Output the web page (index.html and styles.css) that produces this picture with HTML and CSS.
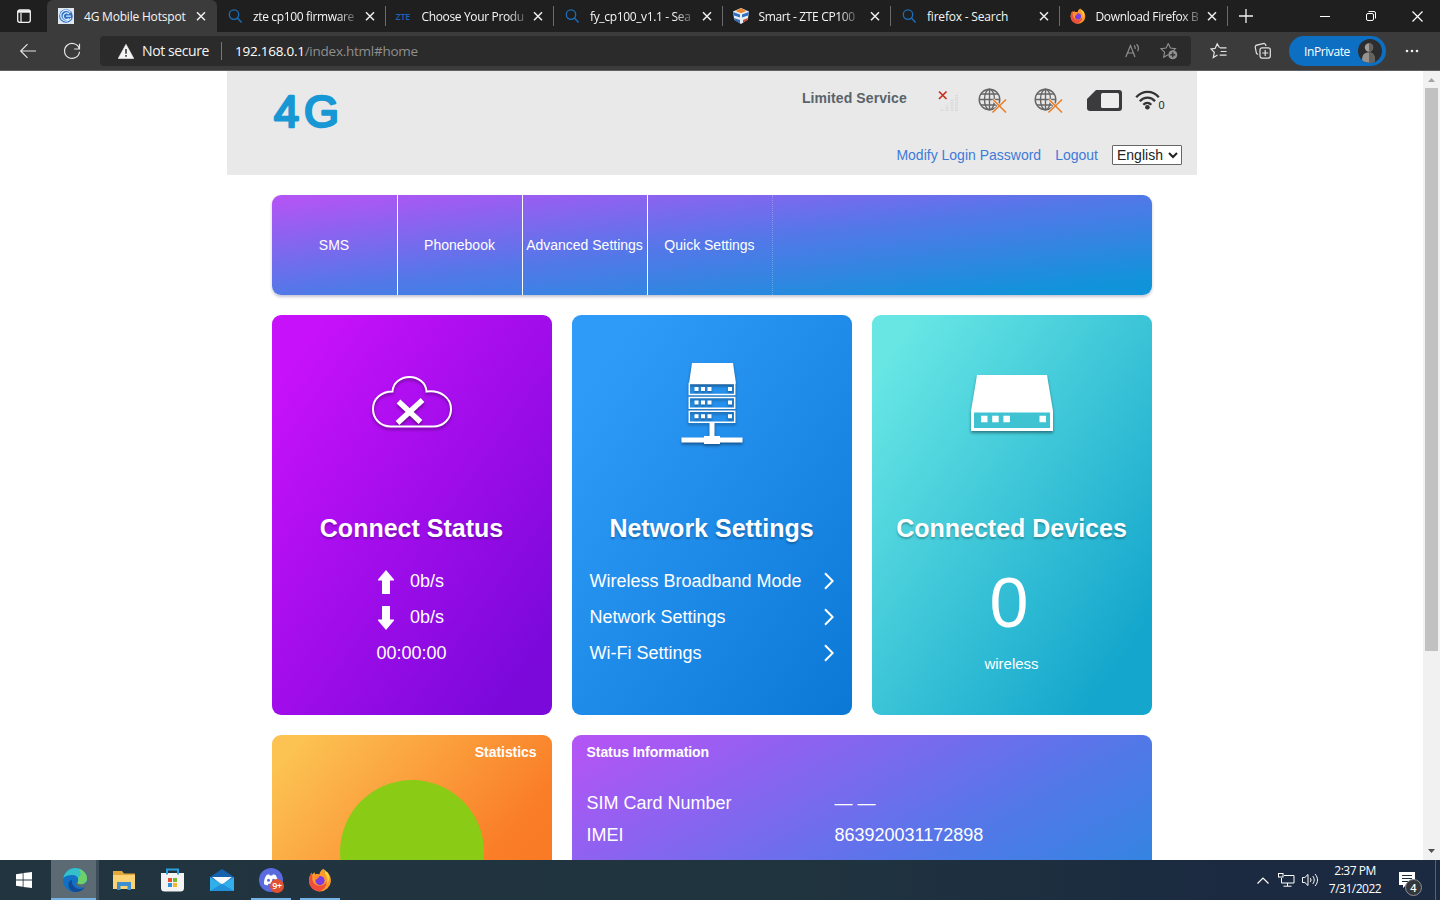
FILE: index.html
```html
<!DOCTYPE html>
<html lang="en">
  <head>
    <meta charset="UTF-8" />
    <meta name="viewport" content="width=device-width, initial-scale=1.0" />
    <title>4G Mobile Hotspot</title>
    <link rel="stylesheet" href="styles.css">
  </head>
  <body>
    <!-- shared icons -->
    <svg class="defs" width="0" height="0">
      <symbol id="close" viewBox="0 0 16 16">
        <path d="M4 4.200l8 8M12 4.200l-8 8" stroke="#f0f0f0" stroke-width="1.500" fill="none" />
      </symbol>
      <symbol id="search" viewBox="0 0 16 16">
        <circle cx="7" cy="6.600" r="4.700" stroke="#1b6fb8" stroke-width="1.300" fill="none" />
        <path d="M10.400 10l4.200 4.400" stroke="#1b6fb8" stroke-width="1.500" />
      </symbol>
      <symbol id="firefox" viewBox="0 0 24 24">
        <path d="M15.500.800c1 2 1 3 1.200 4.200 1.400.400 2-.400 2.300-1.200 3 3.200 4.200 6.200 3.900 9.700A11 11 0 0 1 1 13.500C.800 10 2 7 3.800 4.600l.400 2.200c.800-1.200 1.400-1.900 2.300-2.600l.600 2.300c1.600-.600 3-.500 4.300 0 .400-2.400 1.700-4.500 4.100-5.700z" fill="#ff9a2b" />
        <path d="M1 13.500C.900 10.500 2 7.400 3.800 5l.600 3.400c-.600 3 .600 8.600 6.600 9.300 3.600.400 6.500-1.500 7.500-4.500.600 5-3.500 9.600-8 10C5.500 23 1.400 18.600 1 13.500z" fill="#f04e3c" />
        <path d="M15.500.800c1 2 1 3 1.200 4.200 3.300 4 3.300 7.600 1.800 11 2.600-2.600 4.300-7.300 1-11.500C18 3 16.600 2.300 15.500.800z" fill="#ffd23e" />
        <circle cx="12" cy="12.600" r="4.600" fill="#7a3ee0" />
        <path d="M6 8.500c2-1.600 4.500-1.200 6 .6-2 .3-2 1.400-3.200 2.200-1.600.8-2.800-1-2.800-2.800z" fill="#ff8a26" />
      </symbol>
      <symbol id="globe" viewBox="0 0 30 26">
        <g fill="none" stroke="#666" stroke-width="1.400">
          <circle cx="11.500" cy="11.500" r="10.300" />
          <ellipse cx="11.500" cy="11.500" rx="5" ry="10.300" />
          <path d="M11.500 1v21M1 11.500h21M3 6h17M3 17h17" />
        </g>
        <path d="M15 11.500l13 13M28 11.500l-13.500 13" stroke="#e9e9e9" stroke-width="3" />
        <path d="M15 11.500l13 13M28 11.500l-13.500 13" stroke="#e9812f" stroke-width="1.700" />
      </symbol>
      <symbol id="chevron" viewBox="0 0 10 18">
        <path d="M1 1.200l7.700 7.800L1 16.800" stroke="#fff" stroke-width="2" fill="none" />
      </symbol>
      <symbol id="arrow" viewBox="0 0 16 24">
        <path d="M8 0l8 9.500v1h-4V24H4V10.500H0v-1z" fill="#fff" />
      </symbol>
    </svg>

    <div class="tabs">
      <div class="tab-actions">
        <svg width="16" height="16" viewBox="0 0 16 16">
          <rect x="1.700" y="2" width="12.600" height="12.300" rx="2" fill="none" stroke="#f2f2f2" stroke-width="1.300" />
          <path d="M1.700 3.500h12.600" stroke="#f2f2f2" stroke-width="2.400" />
          <path d="M5 5v9" stroke="#f2f2f2" stroke-width="1.200" />
        </svg>
      </div>
      <div class="tab active">
        <svg width="16" height="16" viewBox="0 0 16 16">
          <rect width="16" height="16" fill="#dfe7f0" />
          <circle cx="8" cy="8" r="6.800" fill="#2d6fc0" />
          <path d="M12.500 4.500A5.400 5.400 0 1 0 13 10M8 8.200h5M11 6A3.300 3.300 0 1 0 11 10.500" stroke="#d7eaff" stroke-width="1.300" fill="none" />
        </svg>
        <span class="tab-title">4G Mobile Hotspot</span>
        <svg class="close" width="16" height="16"><use href="#close" /></svg>
      </div>
      <div class="tab">
        <svg width="16" height="16"><use href="#search" /></svg>
        <span class="tab-title fade">zte cp100 firmware</span>
        <svg class="close" width="16" height="16"><use href="#close" /></svg>
      </div>
      <div class="tab">
        <span class="zte">ZTE</span>
        <span class="tab-title fade">Choose Your Produ</span>
        <svg class="close" width="16" height="16"><use href="#close" /></svg>
      </div>
      <div class="tab">
        <svg width="16" height="16"><use href="#search" /></svg>
        <span class="tab-title fade">fy_cp100_v1.1 - Sea</span>
        <svg class="close" width="16" height="16"><use href="#close" /></svg>
      </div>
      <div class="tab">
        <svg width="16" height="16" viewBox="0 0 16 16">
          <path d="M0 3.500L8 0l8 3.500-1.200 8L8 16l-6.800-4.500z" fill="#e8eef6" />
          <path d="M2.500 3L8 .3 13.500 3 8 5.200z" fill="#e8842c" />
          <path d="M0 4l7 2.500v3L1 7.500zM16 4L9 6.500v3l6-2z" fill="#2f6fbf" />
          <path d="M1 10l6 2v3.500l-5.500-3.300z" fill="#3a6fae" />
          <path d="M15 10l-5 2v2.800l4.300-3z" fill="#c9402c" />
        </svg>
        <span class="tab-title fade">Smart - ZTE CP100</span>
        <svg class="close" width="16" height="16"><use href="#close" /></svg>
      </div>
      <div class="tab">
        <svg width="16" height="16"><use href="#search" /></svg>
        <span class="tab-title">firefox - Search</span>
        <svg class="close" width="16" height="16"><use href="#close" /></svg>
      </div>
      <div class="tab">
        <svg width="16" height="16"><use href="#firefox" /></svg>
        <span class="tab-title fade">Download Firefox B</span>
        <svg class="close" width="16" height="16"><use href="#close" /></svg>
      </div>
      <div class="new-tab">
        <svg width="14" height="14" viewBox="0 0 14 14"><path d="M7 0v14M0 7h14" stroke="#f2f2f2" stroke-width="1.300" /></svg>
      </div>
      <div class="window-buttons">
        <div><svg width="10" height="10" viewBox="0 0 10 10"><path d="M0 5.500h10" stroke="#fff" /></svg></div>
        <div><svg width="10" height="10" viewBox="0 0 10 10"><g fill="none" stroke="#fff"><rect x=".5" y="2.500" width="7" height="7" rx="1.500" /><path d="M2.500.5H8A1.500 1.500 0 0 1 9.500 2v5.500" /></g></svg></div>
        <div><svg width="11" height="11" viewBox="0 0 11 11"><path d="M.5.500l10 10M10.500.5l-10 10" stroke="#fff" stroke-width="1.200" /></svg></div>
      </div>
    </div>

    <div class="toolbar">
      <div class="nav-buttons">
        <svg width="18" height="16" viewBox="0 0 18 16"><path d="M17 8H1.800M8.500 1.200L1.700 8l6.800 6.800" stroke="#e4e4e4" stroke-width="1.200" fill="none" /></svg>
        <svg width="18" height="18" viewBox="0 0 18 18"><path d="M16.300 7A7.500 7.500 0 1 0 16.500 9.700M16.500 1.800V7h-5.300" stroke="#e4e4e4" stroke-width="1.200" fill="none" /></svg>
      </div>
      <div class="address">
        <svg width="16" height="15" viewBox="0 0 16 15">
          <path d="M8 .3L15.800 14.500H.2z" fill="#f4f4f4" stroke="#f4f4f4" stroke-width=".6" stroke-linejoin="round" />
          <path d="M8 5v4.700M8 11v1.700" stroke="#2b2b2b" stroke-width="1.500" />
        </svg>
        <span class="not-secure">Not secure</span>
        <span class="url"><b>192.168.0.1</b>/index.html#home</span>
        <svg class="read" width="16" height="16" viewBox="0 0 16 16">
          <path d="M.8 14L5.500 2.500 10 14M2.400 10h6.200" stroke="#909090" stroke-width="1.200" fill="none" />
          <path d="M9 2.500c1 .8 1.400 2 1.200 3.500M11.500 1.200c1.800 1.600 2.300 4.500 1.200 7" stroke="#909090" stroke-width="1.200" fill="none" />
        </svg>
        <svg class="add-fav" width="18" height="18" viewBox="0 0 18 18">
          <path d="M8.300 1.500l2.100 4.600 5 .6-2.300 2.100M8 12.700l-4.300 2.500.9-5L1 6.700l5.100-.6 2.200-4.600" stroke="#909090" stroke-width="1.100" fill="none" />
          <circle cx="12.800" cy="12.800" r="4.500" fill="#909090" />
          <path d="M12.800 10.300v5M10.300 12.800h5" stroke="#2b2b2b" stroke-width="1.200" />
        </svg>
      </div>
      <div class="tools">
        <svg width="18" height="18" viewBox="0 0 18 18">
          <path d="M9.500 5.700L7.200 1.800 5.100 6.400 1 7l3.300 3.300-1 5.200 4.200-2.500M10 5.800h6.500M10.700 9.500h5.800M9.700 13.200h6.800" stroke="#e4e4e4" stroke-width="1.200" fill="none" />
        </svg>
        <svg width="18" height="18" viewBox="0 0 18 18">
          <g fill="none" stroke="#e4e4e4" stroke-width="1.200">
            <rect x="6" y="5.800" width="10.300" height="10.300" rx="2" />
            <path d="M11.200 8v6M8.200 11h6M4 12.500l-1.500-1L1.200 5 2 3.300 10 1.300l1.500 1 .5 1.700" />
          </g>
        </svg>
        <div class="inprivate">
          <span>InPrivate</span>
          <svg width="24" height="24" viewBox="0 0 24 24">
            <circle cx="12" cy="12" r="12" fill="#2d2d30" />
            <circle cx="11" cy="8.500" r="4.200" fill="#a09d9a" />
            <path d="M4 21c0-6 3-7.500 7-7.500s6 2 6 9.200C12 24.500 7 24 4 21z" fill="#96938f" />
            <path d="M11 4.300a4.200 4.200 0 0 1 0 8.400zM11 13.500c4 0 6 2 6 9.200-2 .9-4 1.200-6 1z" fill="#64615f" />
          </svg>
        </div>
        <svg class="more" width="14" height="4" viewBox="0 0 14 4"><g fill="#eee"><circle cx="2" cy="2" r="1.300" /><circle cx="7" cy="2" r="1.300" /><circle cx="12" cy="2" r="1.300" /></g></svg>
      </div>
    </div>

    <div class="viewport">
      <div class="page">
        <header class="header">
          <svg class="logo" width="70" height="50" viewBox="0 0 70 50">
            <text x="1 31" y="41">4G</text>
          </svg>
          <div class="header-right">
            <div class="status-bar">
              <span class="service">Limited Service</span>
              <svg class="signal" width="20" height="22" viewBox="0 0 20 22">
                <path d="M4 21v-2.500M9 21v-6M14 21V9.500M18.500 21V5" stroke="#dadada" stroke-width="3" stroke-dasharray="1.500 1" />
                <path d="M1 1.500l7.500 7.500M8.500 1.500L1 9" stroke="#c9301c" stroke-width="1.700" />
              </svg>
              <svg class="globe" width="30" height="26"><use href="#globe" /></svg>
              <svg class="globe" width="30" height="26"><use href="#globe" /></svg>
              <svg class="sim" width="35" height="21" viewBox="0 0 35 21">
                <path d="M9 0h23a3 3 0 0 1 3 3v15a3 3 0 0 1-3 3H3a3 3 0 0 1-3-3V9z" fill="#3b3b3d" />
                <rect x="14" y="3" width="18" height="15" rx="1.500" fill="#ededed" />
              </svg>
              <svg class="wifi" width="26" height="20" viewBox="0 0 26 20">
                <g fill="none" stroke="#333" stroke-width="2.300">
                  <path d="M1.200 7.200c6.500-7 16.500-7 22.600 0" />
                  <path d="M4.800 11.200c4.500-4.700 11-4.700 15.200 0" />
                  <path d="M8.300 14.800c2.500-2.500 5.600-2.500 8 0" />
                </g>
                <circle cx="12.400" cy="17.300" r="2.300" fill="#333" />
              </svg>
              <span class="wifi-count">0</span>
            </div>
            <div class="links">
              <a>Modify Login Password</a>
              <a>Logout</a>
              <select><option>English</option></select>
            </div>
          </div>
        </header>

        <main class="content">
          <nav class="menu">
            <a>SMS</a>
            <a>Phonebook</a>
            <a>Advanced Settings</a>
            <a>Quick Settings</a>
          </nav>

          <div class="cards">
            <section class="card connect">
              <div class="card-icon">
                <svg width="82" height="54" viewBox="0 0 82 54">
                  <path d="M19.500 51.500C9 51.500 2 43.500 2 34c0-10 8-17.500 19.500-17.500C22 8 29.500 2 38.500 2S55 8 55.500 16.500C69 14.500 80 22.500 80 34c0 10-7.500 17.500-18 17.500z" fill="none" stroke="#fff" stroke-width="2" />
                  <path d="M27.500 26.500l22 20.500M51.500 25L26.500 48" stroke="#fff" stroke-width="5.500" />
                </svg>
              </div>
              <h3>Connect Status</h3>
              <ul class="speed">
                <li><svg width="16" height="24"><use href="#arrow" /></svg>0b/s</li>
                <li><svg class="down" width="16" height="24"><use href="#arrow" /></svg>0b/s</li>
                <li>00:00:00</li>
              </ul>
            </section>

            <section class="card network">
              <div class="card-icon">
                <svg width="62" height="82" viewBox="0 0 62 82">
                  <path d="M11 0h41l3 20.500H8z" fill="#fff" />
                  <g fill="none" stroke="#fff" stroke-width="1.500">
                    <path d="M8.300 20.500h45.400v11H8.300zM8.300 34.500h45.400v10.700H8.300zM8.300 48.300h45.400v11H8.300z" />
                  </g>
                  <path d="M13.500 26h17M13.500 39.600h17M13.500 53.300h17" stroke="#fff" stroke-width="4" stroke-dasharray="4 2.500" />
                  <path d="M47 26h4M47 39.600h4M47 53.300h4" stroke="#fff" stroke-width="4" />
                  <path d="M28.500 60h5v13h5.500v1.500h22.500V79.500H39V81H23v-1.500H.5V74.500H23V73h5.500z" fill="#fff" />
                </svg>
              </div>
              <h3>Network Settings</h3>
              <ul class="options">
                <li>Wireless Broadband Mode <svg width="10" height="18"><use href="#chevron" /></svg></li>
                <li>Network Settings <svg width="10" height="18"><use href="#chevron" /></svg></li>
                <li>Wi-Fi Settings <svg width="10" height="18"><use href="#chevron" /></svg></li>
              </ul>
            </section>

            <section class="card devices">
              <div class="card-icon">
                <svg width="82" height="56" viewBox="0 0 82 56">
                  <path d="M6 0h70l6 36v20H0V36z" fill="#fff" />
                  <path class="device-front" d="M3 37.500h76V53H3z" />
                  <path d="M10 44h30" stroke="#fff" stroke-width="6.500" stroke-dasharray="6.500 4.700" />
                  <path d="M68.500 44H75" stroke="#fff" stroke-width="6.500" />
                </svg>
              </div>
              <h3>Connected Devices</h3>
              <div class="count">0</div>
              <div class="count-label">wireless</div>
            </section>

            <section class="card statistics">
              <h4>Statistics</h4>
              <div class="pie"></div>
            </section>

            <section class="card status-info">
              <h4>Status Information</h4>
              <dl>
                <dt>SIM Card Number</dt><dd>— —</dd>
                <dt>IMEI</dt><dd>863920031172898</dd>
              </dl>
            </section>
          </div>
        </main>
      </div>

      <div class="scrollbar">
        <svg width="7" height="4" viewBox="0 0 7 4"><path d="M0 4l3.500-4L7 4z" fill="#a3a3a3" /></svg>
        <div class="track"><div class="thumb"></div></div>
        <svg width="7" height="4" viewBox="0 0 7 4"><path d="M0 0h7L3.500 4z" fill="#505050" /></svg>
      </div>
    </div>

    <div class="taskbar">
      <div class="task start">
        <svg width="16" height="16" viewBox="0 0 16 16"><path d="M0 2.200L6.700 1.200v6.400H0zM7.500 1.100L16 0v7.600H7.500zM0 8.400h6.700v6.400L0 13.800zM7.500 8.400H16V16l-8.500-1.100z" fill="#fff" /></svg>
      </div>
      <div class="task current">
        <svg width="24" height="24" viewBox="0 0 24 24">
          <circle cx="12" cy="12" r="12" fill="#1271c4" />
          <path d="M.3 10C1.500 4 6.500 0 12 0c7 0 12 5 12 10.500 0 4-3 6-6 6-2.500 0-4-.8-3.500-1.800 2-3 .5-7.700-5-7.700-4 0-7.300 1-9.200 3z" fill="#35bfc9" />
          <path d="M16 1C20.500 2.500 24 6 24 10.500c0 4-3 6-6 6-2.500 0-4-.8-3.500-1.800 1-1.500 1.200-3.400.4-5C18 9 18.500 5 16 1z" fill="#6fd068" />
          <path d="M9 12c-1 5 3.500 9.500 8.500 9 2-.2 3.500-1 4.700-2C20 22 16.500 24 12.500 24 7 24 5 19 5.500 15.500 6 13.200 7.500 12 9 12z" fill="#114a96" />
          <path d="M14.500 14.700c-.5 1 1 1.800 3.500 1.800 2.500 0 4.800-1.200 5.600-3.400.6 2-.4 4.500-1.700 5.700-3.400 1.500-8.400.2-9.600-3.800z" fill="#5b6a73" />
        </svg>
      </div>
      <div class="task">
        <svg width="22" height="19" viewBox="0 0 22 19">
          <path d="M0 0h9l2 2.500h11V18H0z" fill="#e2a83c" />
          <path d="M0 4h22v14H0z" fill="#fbd375" />
          <path d="M4 19v-8h14v8h-3.500v-4h-7v4z" fill="#3d8fd0" />
        </svg>
      </div>
      <div class="task">
        <svg width="23" height="24" viewBox="0 0 23 24">
          <path d="M0 5h23v15a3.500 3.500 0 0 1-3.500 3.500h-16A3.500 3.500 0 0 1 0 20z" fill="#f3f3f3" />
          <path d="M6 6.500V1.500h11v5" fill="none" stroke="#2aa0dc" stroke-width="2" />
          <path d="M7 10h4v4H7z" fill="#e8502c" /><path d="M12 10h4v4h-4z" fill="#7db72f" />
          <path d="M7 15h4v4H7z" fill="#2b95d8" /><path d="M12 15h4v4h-4z" fill="#f5b62c" />
        </svg>
      </div>
      <div class="task">
        <svg width="24" height="22" viewBox="0 0 24 22">
          <path d="M0 8L12 0l12 8v14H0z" fill="#1461ad" />
          <path d="M2 8h20l-10 8z" fill="#f5f9fd" />
          <path d="M0 8l12 7.200L24 8v14H0z" fill="#32aeea" />
          <path d="M0 22l12-7.200L24 22z" fill="#2291dc" />
        </svg>
      </div>
      <div class="task running">
        <svg width="24" height="24" viewBox="0 0 24 24">
          <circle cx="12" cy="12" r="12" fill="#5a6be0" />
          <path d="M7.500 7l2.500-.8.8 1.300h2.400l.8-1.300 2.500.8c2 3 2.700 6 2.500 9-1.200 1-2.500 1.300-3.500 1.500l-1-1.700h-5l-1 1.700c-1-.2-2.300-.5-3.500-1.500-.2-3 .5-6 2.500-9z" fill="#fff" />
          <circle cx="9.500" cy="12.300" r="1.500" fill="#5a6be0" /><circle cx="14.500" cy="12.300" r="1.500" fill="#5a6be0" />
        </svg>
        <span class="unread">9+</span>
      </div>
      <div class="task running">
        <svg width="24" height="24"><use href="#firefox" /></svg>
      </div>

      <div class="tray">
        <svg width="12" height="7" viewBox="0 0 12 7"><path d="M.5 6.500L6 1l5.500 5.500" stroke="#fff" stroke-width="1.200" fill="none" /></svg>
        <svg width="17" height="14" viewBox="0 0 17 14">
          <g fill="none" stroke="#fff"><path d="M6 2.500h10v7.500H3.500V5M9.500 10v3M5.500 13.200h8" /><rect x=".5" y=".5" width="4.500" height="3.500" /></g>
        </svg>
        <svg width="17" height="14" viewBox="0 0 17 14">
          <g fill="none" stroke="#fff"><path d="M.5 4.500h2.300L6 1.500v11L2.800 9.500H.5zM8.300 5c.9 1.200.9 2.800 0 4M10.700 3c2 2.300 2 5.700 0 8M13 1c3.300 3.500 3.300 8.500 0 12" /></g>
        </svg>
        <div class="clock"><span>2:37 PM</span><span>7/31/2022</span></div>
        <div class="notify">
          <svg width="17" height="16" viewBox="0 0 17 16"><path d="M0 0h16v13H7l-3 3v-3H0z" fill="#fff" /><path d="M3 3.500h10M3 6.500h10M3 9.500h6" stroke="#1c2b3f" /></svg>
          <span class="badge">4</span>
        </div>
      </div>
    </div>
  </body>
</html>
```
FILE: styles.css
```css
:root {
  --ui-font: "Open Sans", "Noto Sans", sans-serif;
  --page-font: "Liberation Sans", Arial, sans-serif;
  --tabs-bg: #1f1f1f;
  --bar-bg: #3b3b3b;
  --purple-blue: linear-gradient(to bottom right, #b255f5 3%, #5278e8 50%, #1193da 92%);
}

* {
  box-sizing: border-box;
}

body {
  margin: 0;
  width: 1440px;
  height: 900px;
  overflow: hidden;
  display: flex;
  flex-direction: column;
  font-family: var(--page-font);
  background: #fff;
}

svg {
  display: block;
  flex: none;
}

.defs {
  position: absolute;
}

ul,
dl,
dd,
h3,
h4 {
  margin: 0;
  padding: 0;
  list-style: none;
}

/* Tab strip */
.tabs {
  flex: none;
  height: 32px;
  display: flex;
  background: var(--tabs-bg);
  font-family: var(--ui-font);
  font-size: 12px;
  color: #f5f5f5;
}

.tab-actions {
  width: 47px;
  display: flex;
  align-items: center;
  justify-content: center;
}

.tab {
  width: 168.5px;
  flex: none;
  display: flex;
  align-items: center;
  padding-left: 10px;
}

.tab.active {
  width: 170px;
  padding-left: 11px;
  background: var(--bar-bg);
  border-radius: 6px 6px 0 0;
}

.tab:not(.active) {
  background: linear-gradient(#6b6b6b, #6b6b6b) right 6px / 1px 20px no-repeat;
}

.tab-title {
  margin-left: 10px;
  white-space: nowrap;
  letter-spacing: -0.2px;
}

.fade {
  letter-spacing: -0.35px;
  mask-image: linear-gradient(to right, #000 84%, rgba(0, 0, 0, 0.3) 100%);
}

.close {
  margin-left: auto;
  margin-right: 8px;
}

.zte {
  width: 16px;
  font-size: 9px;
  font-weight: 600;
  color: #1b62b5;
  letter-spacing: -0.3px;
}

.new-tab {
  width: 35px;
  display: flex;
  align-items: center;
  justify-content: center;
}

.window-buttons {
  margin-left: auto;
  display: flex;
}

.window-buttons div {
  width: 46px;
  display: flex;
  align-items: center;
  justify-content: center;
}

/* Toolbar */
.toolbar {
  flex: none;
  height: 39px;
  display: flex;
  align-items: center;
  background: var(--bar-bg);
  border-bottom: 1px solid #625d62;
  font-family: var(--ui-font);
}

.nav-buttons {
  width: 100px;
  display: flex;
  gap: 26px;
  padding-left: 19px;
  align-items: center;
}

.address {
  width: 1091px;
  height: 30px;
  display: flex;
  align-items: center;
  padding: 0 13px 0 18px;
  background: #2b2b2b;
  border-radius: 4px;
  font-size: 14px;
  letter-spacing: -0.4px;
}

.not-secure {
  margin-left: 8px;
  width: 80px;
  line-height: 18px;
  white-space: nowrap;
  border-right: 1px solid #777;
  color: #f4f4f4;
}

.url {
  margin-left: 13px;
  font-size: 13.5px;
  letter-spacing: -0.25px;
  color: #8f8f8f;
}

.url b {
  font-weight: 400;
  color: #fff;
}

.read {
  margin-left: auto;
}

.add-fav {
  margin-left: 19px;
}

.tools {
  flex: 1;
  display: flex;
  align-items: center;
  padding-left: 19px;
  gap: 26px;
}

.inprivate {
  width: 97px;
  height: 30px;
  margin: 0 -7px 0 -9px;
  display: flex;
  align-items: center;
  justify-content: space-between;
  padding: 0 4px 0 15px;
  background: #0c6fc2;
  border-radius: 15px;
  color: #fff;
  font-size: 12px;
  letter-spacing: -0.4px;
}

/* Page */
.viewport {
  flex: 1;
  min-height: 0;
  display: flex;
  overflow: hidden;
}

.page {
  width: 1423px;
  padding-left: 226.5px;
}

.header {
  width: 970px;
  height: 104px;
  display: flex;
  justify-content: space-between;
  padding: 15px 14.5px 0 46px;
  background: #e9e9e9;
}

.logo {
  font-size: 45px;
  fill: #1798d4;
  stroke: #1798d4;
  stroke-width: 2.6px;
  stroke-linejoin: round;
}

.header-right {
  display: flex;
  flex-direction: column;
  align-items: flex-end;
}

.status-bar {
  height: 26px;
  display: flex;
  padding-right: 17.5px;
}

.service {
  margin-right: 31.5px;
  font-size: 14px;
  font-weight: bold;
  line-height: 25px;
  letter-spacing: 0.1px;
  color: #59646a;
}

.signal {
  margin-top: 4px;
}

.globe {
  margin: 2px 6px 0 20px;
}

.globe + .globe {
  margin-right: 23px;
}

.sim {
  margin-top: 4px;
}

.wifi {
  margin: 4px 0 0 13px;
}

.wifi-count {
  margin-left: -3px;
  margin-bottom: 1px;
  align-self: flex-end;
  font-size: 11px;
  line-height: 11px;
  color: #222;
}

.links {
  display: flex;
  align-items: center;
  gap: 14px;
  margin-top: 33px;
  font-size: 14px;
}

.links a {
  color: #3d7bd8;
}

.links select {
  width: 70px;
  height: 20px;
  padding: 0;
  font: 14px var(--page-font);
  color: #222;
  background: #fff;
  border: 1px solid #666;
  border-radius: 1px;
}

.content {
  width: 880px;
  margin: 20px 0 0 45px;
}

.menu {
  height: 100px;
  display: flex;
  border-radius: 9px;
  background: var(--purple-blue);
  box-shadow: 0 2px 3px rgba(60, 60, 110, 0.3);
}

.menu a {
  width: 125px;
  line-height: 100px;
  text-align: center;
  white-space: nowrap;
  font-size: 14px;
  color: #fff;
  border-right: 1px solid #fff;
}

.menu a:first-child {
  width: 126px;
}

.menu a:last-child {
  border-right: 1px dotted rgba(255, 255, 255, 0.25);
}

.cards {
  margin-top: 20px;
  display: grid;
  grid-template-columns: repeat(3, 280px);
  grid-template-rows: 400px 320px;
  gap: 20px;
}

.card {
  border-radius: 9px;
  color: #fff;
  font-size: 18px;
}

.connect {
  background: linear-gradient(to bottom right, #c611fa 10%, #7b09da 90%);
}

.network {
  background: linear-gradient(to bottom right, #2f9bf8 12%, #0b78d6);
}

.devices {
  background: linear-gradient(to bottom right, #67e6e4 8%, #14a6cc 88%);
}

.card-icon {
  height: 178px;
  display: flex;
  align-items: center;
  justify-content: center;
}

.card-icon svg {
  filter: drop-shadow(0 2px 1.5px rgba(0, 0, 0, 0.4));
}

.connect .card-icon {
  padding-bottom: 4px;
}

.devices .card-icon {
  padding-bottom: 2px;
}

.device-front {
  fill: #3fc3d2;
}

.card h3 {
  margin-top: 20px;
  font-size: 25px;
  line-height: 30px;
  text-align: center;
  white-space: nowrap;
  text-shadow: 0 2px 2px rgba(0, 0, 0, 0.25);
}

.speed,
.options {
  margin-top: 20px;
  line-height: 36px;
}

.speed {
  padding-left: 105px;
}

.speed li {
  height: 36px;
  display: flex;
  align-items: center;
}

.speed svg {
  margin: 1px 16px 0 1.5px;
}

.down {
  transform: rotate(180deg);
}

.options li {
  display: flex;
  align-items: center;
  justify-content: space-between;
  padding: 0 18px;
}

.count {
  margin-top: 20px;
  padding-right: 5px;
  font-size: 70px;
  line-height: 80px;
  text-align: center;
}

.count-label {
  margin-top: 12px;
  font-size: 15px;
  line-height: 18px;
  text-align: center;
}

.card h4 {
  padding: 0 15px;
  font-size: 14px;
  line-height: 34px;
  letter-spacing: -0.06px;
}

.statistics {
  background: linear-gradient(to bottom right, #fcc252 6%, #fa7d27 58%, #f8701f);
}

.statistics h4 {
  text-align: right;
}

.pie {
  width: 144px;
  height: 144px;
  margin: 11px auto 0;
  border-radius: 50%;
  background: #8acb16;
}

.status-info {
  grid-column: span 2;
  background: var(--purple-blue);
}

.status-info dl {
  margin-top: 18px;
  padding-left: 15px;
  display: grid;
  grid-template-columns: 248px 1fr;
  line-height: 32px;
}

/* Scrollbar */
.scrollbar {
  width: 17px;
  display: flex;
  flex-direction: column;
  align-items: center;
  padding: 7px 0;
  background: #f1f1f1;
}

.track {
  flex: 1;
  padding-top: 6px;
}

.thumb {
  width: 13px;
  height: 563px;
  background: #c1c1c1;
}

/* Taskbar */
.taskbar {
  flex: none;
  height: 40px;
  display: flex;
  background: linear-gradient(to right, #21343f, #20343f 55%, #1b2a40 85%);
  font-family: var(--ui-font);
  color: #fff;
}

.task {
  width: 49px;
  display: flex;
  align-items: center;
  justify-content: center;
  position: relative;
}

.start {
  width: 50px;
  padding-right: 2px;
}

.current {
  background:
    linear-gradient(#76b3e6, #76b3e6) 1px bottom / 45px 2px no-repeat,
    linear-gradient(to right, #5b6a73 45px, #3d4d57 45px, #3d4d57 48px, transparent 48px) 1px 0 no-repeat;
}

.running {
  background: linear-gradient(#76b3e6, #76b3e6) center bottom / 40px 2px no-repeat;
}

.unread {
  position: absolute;
  right: 11px;
  bottom: 7px;
  width: 14px;
  height: 14px;
  border-radius: 50%;
  background: #e0512f;
  font-size: 9px;
  font-weight: 600;
  line-height: 14px;
  text-align: center;
  letter-spacing: -0.5px;
}

.tray {
  margin-left: auto;
  display: flex;
  align-items: center;
  gap: 9px;
  width: 179px;
  border-right: 1px solid #56626f;
  margin-right: 4px;
}

.tray > svg:nth-child(2) {
  margin-right: -2px;
}

.clock {
  width: 54px;
  display: flex;
  flex-direction: column;
  align-items: center;
  font-size: 12px;
  line-height: 18px;
  letter-spacing: -0.5px;
  white-space: nowrap;
}

.notify {
  position: relative;
  margin-left: 8px;
}

.badge {
  position: absolute;
  left: 6px;
  top: 7px;
  width: 17px;
  height: 17px;
  border-radius: 50%;
  border: 1px solid #8a9099;
  background: #33363b;
  font-size: 11px;
  font-weight: 600;
  line-height: 15px;
  text-align: center;
}
```
